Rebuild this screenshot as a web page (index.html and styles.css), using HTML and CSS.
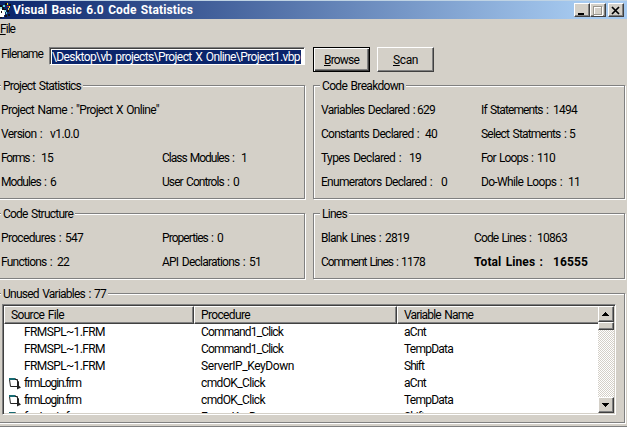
FILE: index.html
```html
<!DOCTYPE html>
<html lang="en">
<head>
<meta charset="utf-8">
<title>Visual Basic 6.0 Code Statistics</title>
<link rel="stylesheet" href="styles.css">
</head>
<body>
<div class="window">
  <header class="titlebar">
    <svg class="appicon" width="12" height="16" viewBox="0 0 12 16" shape-rendering="crispEdges">
      <path fill="#111" d="M0 3h2v2h2v2h2v3H4v4H2v2H0zM5 1h3v2H5zM9 2h2v2H9z"/>
      <path fill="#fff" d="M0 7h2v1h3v5H4v2H0z"/>
      <path fill="#9fe4e4" d="M0 5h2v2H0zM4 8h2v2H4z"/>
      <path fill="#f5e040" d="M7 1h1v2H7zM9 4h1v2H9zM8 6h1v2H8z"/>
      <path fill="#5bd6d6" d="M3 3h2v2H3zM6 10h1v2H6z"/>
      <path fill="#c82020" d="M7 4h2v1H7z"/>
      <path fill="#111" d="M7 8h2v2H7zM8 12h2v2H8zM5 13h2v2H5zM1 9h1v2H1z"/>
    </svg>
    <h1><span data-w="180">Visual Basic 6.0 Code Statistics</span></h1>
    <div class="controls">
      <i class="ctl"><svg width="15" height="13" shape-rendering="crispEdges"><path fill="#000" d="M4 9h6v2H4z"/></svg></i>
      <i class="ctl"><svg width="15" height="13" shape-rendering="crispEdges"><path fill="none" stroke="#fff" d="M4.500 3.500h8v8h-8z"/><path fill="none" stroke="#99958c" d="M3.500 2.500h8v8h-8z"/></svg></i>
      <i class="ctl close"><svg width="15" height="13"><path fill="none" stroke="#000" stroke-width="1.700" d="M4 3l7 7M11 3l-7 7"/></svg></i>
    </div>
  </header>
  <nav class="menu"><span data-w="15"><u>F</u>ile</span></nav>
  <div class="filebar">
    <label><span data-w="42">Filename</span></label>
    <div class="field"><mark><span data-w="248">\Desktop\vb projects\Project X Online\Project1.vbp</span></mark></div>
    <button class="default"><span data-w="35"><u>B</u>rowse</span></button>
    <button><span data-w="25"><u>S</u>can</span></button>
  </div>
  <main>
    <section class="group left">
      <h2><span data-w="78">Project Statistics</span></h2>
      <div class="facts">
        <p class="wide"><span data-w="158">Project Name : "Project X Online"</span></p>
        <p class="wide"><span data-w="41">Version :</span><span data-w="29" data-gap="8">v1.0.0</span></p>
        <p><span data-w="33">Forms :</span><span data-w="12" data-gap="7">15</span></p>
        <p><span data-w="72">Class Modules :</span><span data-w="6" data-gap="7">1</span></p>
        <p><span data-w="45">Modules :</span><span data-w="6" data-gap="4">6</span></p>
        <p><span data-w="67">User Controls :</span><span data-w="6" data-gap="4">0</span></p>
      </div>
    </section>
    <section class="group">
      <h2><span data-w="82">Code Breakdown</span></h2>
      <div class="facts">
        <p><span data-w="94">Variables Declared :</span><span data-w="18" data-gap="2">629</span></p>
        <p><span data-w="67">If Statements :</span><span data-w="24" data-gap="5">1494</span></p>
        <p><span data-w="98">Constants Declared :</span><span data-w="12" data-gap="6">40</span></p>
        <p><span data-w="85">Select Statments :</span><span data-w="6" data-gap="3">5</span></p>
        <p><span data-w="80">Types Declared :</span><span data-w="12" data-gap="8">19</span></p>
        <p><span data-w="52">For Loops :</span><span data-w="18" data-gap="4">110</span></p>
        <p><span data-w="111">Enumerators Declared :</span><span data-w="6" data-gap="9">0</span></p>
        <p><span data-w="81">Do-While Loops :</span><span data-w="12" data-gap="6">11</span></p>
      </div>
    </section>
    <section class="group left">
      <h2><span data-w="70">Code Structure</span></h2>
      <div class="facts">
        <p><span data-w="60">Procedures :</span><span data-w="18" data-gap="4">547</span></p>
        <p><span data-w="51">Properties :</span><span data-w="6" data-gap="4">0</span></p>
        <p><span data-w="51">Functions :</span><span data-w="12" data-gap="5">22</span></p>
        <p><span data-w="83">API Declarations :</span><span data-w="12" data-gap="4">51</span></p>
      </div>
    </section>
    <section class="group lines">
      <h2><span data-w="25">Lines</span></h2>
      <div class="facts">
        <p><span data-w="60">Blank Lines :</span><span data-w="24" data-gap="4">2819</span></p>
        <p><span data-w="57">Code Lines :</span><span data-w="30" data-gap="6">10863</span></p>
        <p><span data-w="77">Comment Lines :</span><span data-w="24" data-gap="3">1178</span></p>
        <p class="total"><span data-w="69">Total Lines :</span><span data-w="35" data-gap="10">16555</span></p>
      </div>
    </section>
    <section class="group unused left">
      <h2><span data-w="103">Unused Variables : 77</span></h2>
      <div class="list">
        <div class="table">
          <div class="row head"><b><span data-w="53">Source File</span></b><b><span data-w="49">Procedure</span></b><b><span data-w="69">Variable Name</span></b></div>
          <div class="row"><div class="src"><span data-w="81">FRMSPL~1.FRM</span></div><div><span data-w="82">Command1_Click</span></div><div><span data-w="22">aCnt</span></div></div>
          <div class="row"><div class="src"><span data-w="81">FRMSPL~1.FRM</span></div><div><span data-w="82">Command1_Click</span></div><div><span data-w="49">TempData</span></div></div>
          <div class="row"><div class="src"><span data-w="81">FRMSPL~1.FRM</span></div><div><span data-w="93">ServerIP_KeyDown</span></div><div><span data-w="20">Shift</span></div></div>
          <div class="row"><div class="src"><svg class="form" width="14" height="13"><use href="#form"/></svg><span data-w="57">frmLogin.frm</span></div><div><span data-w="64">cmdOK_Click</span></div><div><span data-w="22">aCnt</span></div></div>
          <div class="row"><div class="src"><svg class="form" width="14" height="13"><use href="#form"/></svg><span data-w="57">frmLogin.frm</span></div><div><span data-w="64">cmdOK_Click</span></div><div><span data-w="49">TempData</span></div></div>
          <div class="row"><div class="src"><svg class="form" width="14" height="13"><use href="#form"/></svg><span data-w="57">frmLogin.frm</span></div><div><span data-w="76">Form_KeyDown</span></div><div><span data-w="20">Shift</span></div></div>
        </div>
        <div class="scroll">
          <i class="arrow"><svg width="12" height="12" shape-rendering="crispEdges"><path d="M5 4h1v1h1v1h1v1h1v1H2V7h1V6h1V5h1z"/></svg></i>
          <i class="thumb"></i>
          <i class="track"></i>
          <i class="arrow"><svg width="12" height="12" shape-rendering="crispEdges"><path d="M2 4h7v1H8v1H7v1H6v1H5V7H4V6H3V5H2z"/></svg></i>
        </div>
      </div>
    </section>
  </main>
</div>
<svg width="0" height="0" class="defs">
  <symbol id="form" viewBox="0 0 14 13">
    <path fill="#fff" stroke="#222" d="M1.500 2.500h8v7h-7z"/>
    <path stroke="#176b73" stroke-width="2" d="M1 2h6"/>
    <path stroke="#222" fill="none" d="M7 1.500l3.500 3v5"/>
    <path fill="#222" d="M9 7l4 3.500L9 12.500z"/>
  </symbol>
</svg>
<script src="fit.js"></script>
</body>
</html>
```
FILE: styles.css
```css
* { box-sizing: border-box; margin: 0; padding: 0; }
body {
  width: 627px; height: 427px; overflow: hidden;
  background: #d4d0c8; color: #000;
  font: 12px/14px Roboto, "Liberation Sans", sans-serif;
}
h1, h2, b { font-size: 12px; font-weight: 400; }
u { text-underline-offset: 1px; }
i { display: block; }
[data-w] { display: inline-block; white-space: pre; word-spacing: 1.2px; }
.defs { display: block; }

.window { height: 427px; overflow: hidden; border-top: 1px solid #bfd3e4; border-bottom: 1px solid #808080; }
.titlebar {
  display: flex; align-items: center; height: 18px; padding-right: 3px;
  background: linear-gradient(90deg, #0a246a, #a6caf0 93%);
}
.appicon { width: 12px; }
h1 { flex: 1; padding-left: 1px; color: #fff; font-weight: 700; }
.controls { display: flex; }
.ctl {
  width: 16px; height: 14px; background: #d4d0c8;
  border: 1px solid; border-color: #fff #404040 #404040 #fff;
  box-shadow: inset -1px -1px #808080;
}
.ctl svg { display: block; margin-left: -1px; }
.close { margin-left: 2px; }

.menu { height: 28px; padding-top: 3px; }
.filebar { display: flex; align-items: flex-start; height: 38px; }
.filebar label { width: 49px; padding: 0 0 0 1px; }
.field {
  width: 256px; height: 18px; padding: 1px; background: #fff;
  border: 1px solid; border-color: #808080 #fff #fff #808080;
  box-shadow: inset 1px 1px #404040;
}
mark { display: block; width: 249px; height: 14px; margin: 1px 0 0 1px; background: #0a246a; color: #fff; }
button {
  width: 57px; height: 25px; margin-left: 7px; background: #d4d0c8; font: inherit; color: #000;
  border: 1px solid; border-color: #fff #404040 #404040 #fff;
  box-shadow: inset -1px -1px #808080;
}
button.default { margin-left: 8px; border-color: #000; box-shadow: inset 1px 1px #fff, inset -1px -1px #404040, inset -2px -2px #808080; }

main {
  display: grid; grid-template-columns: 309px 312px; grid-template-rows: 114px 66px 130px;
  row-gap: 14px; column-gap: 8px; margin-left: -4px;
}
.group { border: 1px solid #808080; box-shadow: 1px 1px #fff, inset 1px 1px #fff; }
h2 { width: max-content; height: 14px; margin: -7px 0 0 6px; padding: 0 2px; background: #d4d0c8; }
.facts { display: grid; grid-template-columns: 160px auto; grid-auto-rows: 24px; padding: 10px 0 0 7px; }
.left h2 { margin-left: 4px; }
.left .facts { grid-template-columns: 161px auto; padding-left: 4px; }
.lines .facts { grid-template-columns: 153px auto; }
.wide { grid-column: 1 / 3; }
.facts p { white-space: nowrap; }
.total { font-weight: 700; }
.unused { grid-column: 1 / 3; }

.list {
  display: flex; width: 614px; height: 111px; margin: 3px 0 0 5px; background: #fff;
  border: 1px solid; border-color: #808080 #fff #fff #808080;
  box-shadow: inset 1px 1px #404040, inset -1px -1px #d4d0c8; padding: 1px;
}
.table { flex: 1; overflow: hidden; }
.row { display: grid; grid-template-columns: 190px 203px auto; height: 17px; line-height: 17px; }
.row > div { padding-left: 7px; }
.row .src { display: flex; align-items: center; padding-left: 20px; }
.form { margin: 0 2px 0 -16px; }
.head { height: 17px; margin-bottom: 1px; }
.head b {
  padding-left: 6px; background: #d4d0c8; line-height: 16px;
  border: 1px solid; border-color: #fff #404040 #404040 #fff;
  box-shadow: inset -1px -1px #808080;
}
.head b:last-child { border-right: 0; box-shadow: inset 0 -1px #808080; }
.scroll { display: flex; flex-direction: column; width: 16px; }
.arrow, .thumb {
  width: 16px; height: 16px; background: #d4d0c8;
  border: 1px solid; border-color: #fff #404040 #404040 #fff;
  box-shadow: inset -1px -1px #808080;
}
.arrow svg { display: block; margin: 1px; }
.thumb { height: 8px; }
.track { flex: 1; background: repeating-conic-gradient(#fff 0 25%, #d4d0c8 0 50%) 0 0 / 2px 2px; }
```
FILE: fit.js
```js
// Set each run of text to the width given in its data-w attribute.
document.querySelectorAll('[data-w]').forEach(function (el) {
  var want = Number(el.dataset.w);
  var have = el.getBoundingClientRect().width;
  el.style.letterSpacing = (want - have) / el.textContent.length + 'px';
  el.style.width = want + 'px';
  if (el.dataset.gap) el.style.marginLeft = el.dataset.gap + 'px';
});
```
